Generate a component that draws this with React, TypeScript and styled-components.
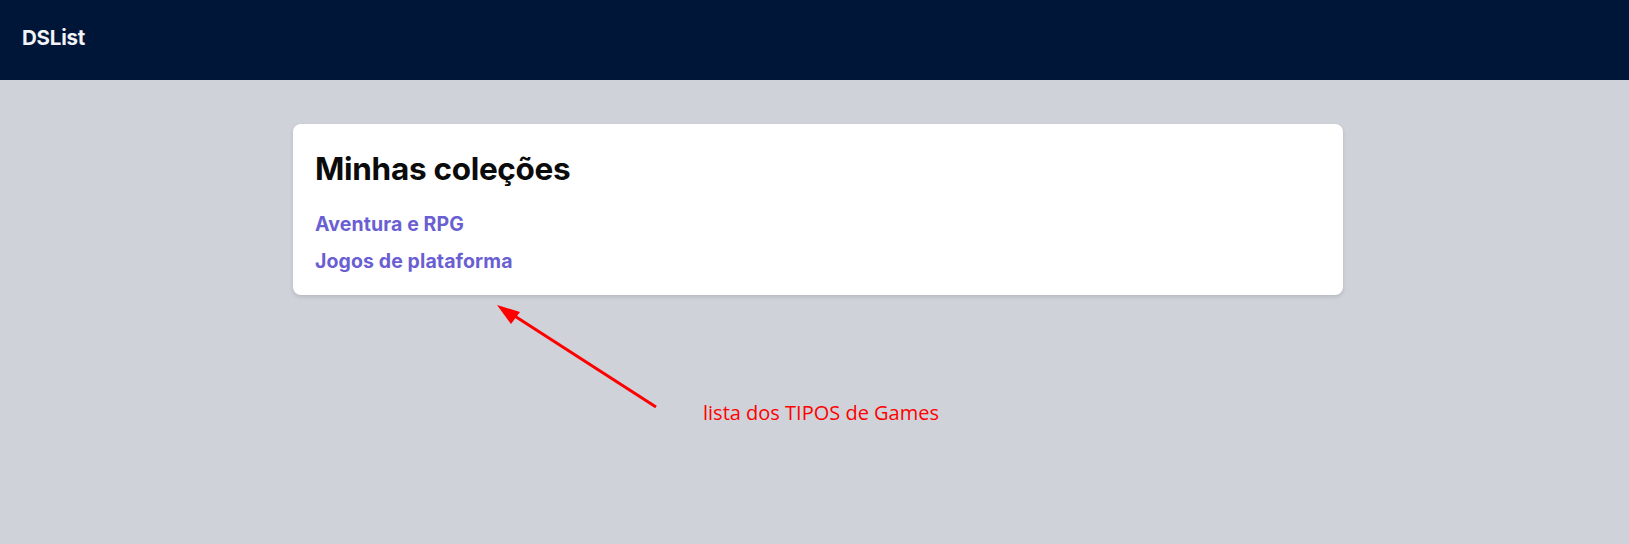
import React from "react";
import styled, { createGlobalStyle } from "styled-components";

const GlobalStyle = createGlobalStyle`
  html, body { margin: 0; padding: 0; }
  body {
    background: #cfd2d9;
    font-family: Inter, Roboto, "Liberation Sans", sans-serif;
    min-height: 544px;
  }
`;

const Page = styled.div`
  position: relative;
  min-height: 544px;
`;

const Header = styled.header`
  height: 80px;
  background: #001638;
  display: flex;
  align-items: center;
  padding: 0 22px;
  box-sizing: border-box;
`;

const Logo = styled.h1`
  margin: 0;
  color: #f2f4f7;
  font-size: 20.5px;
  font-weight: 700;
  letter-spacing: -0.2px;
  padding-bottom: 6px;
`;

const Main = styled.main`
  display: flex;
  justify-content: center;
  padding: 44px 0 0 7px;
`;

const Card = styled.section`
  width: 1050px;
  background: #ffffff;
  border-radius: 8px;
  box-shadow: 0 2px 4px rgba(0, 0, 0, 0.12);
  padding: 26px 22px 22px;
  box-sizing: border-box;
`;

const Title = styled.h2`
  margin: 0 0 25px;
  font-size: 31.5px;
  font-weight: 700;
  color: #0b0b0b;
  letter-spacing: -0.3px;
  line-height: 38px;
`;

const List = styled.ul`
  list-style: none;
  margin: 0;
  padding: 0;
  display: flex;
  flex-direction: column;
  gap: 14px;
`;

const Item = styled.li`
  font-size: 19.5px;
  font-weight: 700;
  color: #6a5fd2;
  line-height: 23px;
  letter-spacing: 0.1px;
`;

const Annotation = styled.div`
  position: absolute;
  left: 0;
  top: 0;
  pointer-events: none;
`;

const Note = styled.span`
  position: absolute;
  left: 703px;
  top: 400px;
  white-space: nowrap;
  color: #ff0000;
  font-family: "Open Sans", "Noto Sans", sans-serif;
  font-size: 20px;
  line-height: 26px;
`;

export default function App() {
  return (
    <Page>
      <GlobalStyle />
      <Header>
        <Logo>DSList</Logo>
      </Header>
      <Main>
        <Card>
          <Title>Minhas coleções</Title>
          <List>
            <Item>Aventura e RPG</Item>
            <Item>Jogos de plataforma</Item>
          </List>
        </Card>
      </Main>
      <Annotation>
        <svg width="1629" height="544" style={{ position: "absolute", left: 0, top: 0 }}>
          <line x1="656" y1="407" x2="510" y2="313" stroke="#ff0000" strokeWidth="3" />
          <polygon points="497,305 520,312 511,324" fill="#ff0000" />
        </svg>
        <Note>lista dos TIPOS de Games</Note>
      </Annotation>
    </Page>
  );
}
